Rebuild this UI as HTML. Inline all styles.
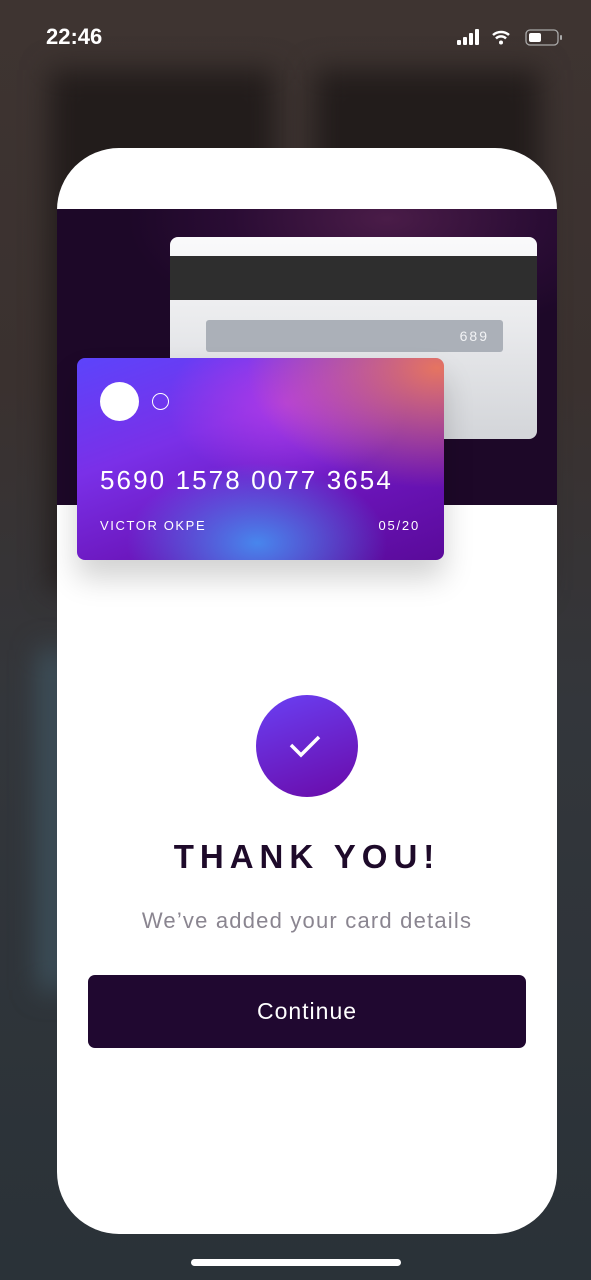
<!DOCTYPE html>
<html><head><meta charset="utf-8"><style>
*{margin:0;padding:0;box-sizing:border-box}
body{width:591px;height:1280px;overflow:hidden;position:relative;font-family:"Liberation Sans",sans-serif;
background:linear-gradient(180deg,#3e3431 0%,#3a312f 30%,#33363b 55%,#2a3238 100%)}
.abs{position:absolute}
.blur1{left:50px;top:70px;width:225px;height:520px;background:#221c1b;filter:blur(14px)}
.blur2{left:315px;top:70px;width:225px;height:520px;background:#221c1b;filter:blur(14px)}
.blur3{left:40px;top:650px;width:25px;height:340px;background:#3f5561;filter:blur(14px)}
.modal{left:57px;top:148px;width:500px;height:1086px;background:#fff;border-radius:62px;overflow:hidden}
.band{left:0;top:61px;width:500px;height:296px;background:radial-gradient(ellipse 260px 120px at 330px 10px,#4a1c48 0%,#2a0c34 60%,#1d0828 100%)}
.back{left:113px;top:89px;width:367px;height:202px;border-radius:8px;background:linear-gradient(180deg,#fafafb,#d3d5d9);overflow:hidden}
.strip{left:0;top:19px;width:100%;height:44px;background:#2e2e2e}
.cvv{left:36px;top:83px;width:297px;height:32px;background:#abb0b8;border-radius:3px;color:#f2f3f5;font-size:14px;letter-spacing:2px;text-align:right;padding-right:14px;line-height:32px}
.front{left:20px;top:210px;width:367px;height:202px;border-radius:8px;overflow:hidden;
background:
radial-gradient(ellipse 130px 80px at 180px 185px,rgba(70,140,240,.95),rgba(70,140,240,0) 100%),
radial-gradient(ellipse 190px 120px at 360px 10px,rgba(235,120,90,.95),rgba(235,120,90,0) 100%),
radial-gradient(ellipse 120px 80px at 210px 45px,rgba(180,60,230,.9),rgba(180,60,230,0) 100%),
linear-gradient(160deg,#5c44fb 0%,#7a30e8 35%,#6a14b8 70%,#5a0a9a 100%);
box-shadow:0 18px 30px rgba(0,0,0,.18)}
.c1{left:23px;top:24px;width:39px;height:39px;border-radius:50%;background:#fff}
.c2{left:75px;top:35px;width:17px;height:17px;border-radius:50%;border:1px solid #fff}
.num{left:23px;top:107px;color:#fff;font-size:26px;letter-spacing:2.1px}
.name{left:23px;top:160px;color:#fff;font-size:13px;letter-spacing:1.6px}
.exp{right:24px;top:160px;color:#fff;font-size:13px;letter-spacing:1.8px}
.check{left:199px;top:547px;width:102px;height:102px;border-radius:50%;background:linear-gradient(160deg,#6a40f4,#6a0aa8)}
.ty{left:0;width:500px;top:690px;text-align:center;font-size:33px;font-weight:bold;letter-spacing:6px;color:#1e0a2a}
.sub{left:0;width:500px;top:760px;text-align:center;font-size:22px;letter-spacing:1.2px;color:#8a8590}
.btn{left:31px;top:827px;width:438px;height:73px;border-radius:7px;background:#200830;color:#fff;font-size:23px;letter-spacing:1px;text-align:center;line-height:73px}
.home{left:191px;top:1259px;width:210px;height:7px;border-radius:4px;background:#fff}
</style></head><body>
<div class="abs blur1"></div><div class="abs blur2"></div><div class="abs blur3"></div>
<div class="abs" style="left:46px;top:24px;color:#fff;font-size:22px;font-weight:bold">22:46</div>
<svg class="abs" style="left:455px;top:28px" width="110" height="20" viewBox="0 0 110 20">
<rect x="2" y="12" width="4" height="5" rx="1" fill="#fff"/><rect x="8" y="9" width="4" height="8" rx="1" fill="#fff"/><rect x="14" y="5" width="4" height="12" rx="1" fill="#fff"/><rect x="20" y="1" width="4" height="16" rx="1" fill="#fff"/>
<path d="M38 7a12 12 0 0 1 16 0" stroke="#fff" stroke-width="2.5" fill="none"/><path d="M41 10.5a7 7 0 0 1 10 0" stroke="#fff" stroke-width="2.5" fill="none"/><circle cx="46" cy="14.5" r="2" fill="#fff"/>
<rect x="71" y="2" width="32" height="15" rx="4" stroke="#aaa" stroke-width="1.3" fill="none"/><rect x="74" y="5" width="12" height="9" rx="2" fill="#fff"/><rect x="105" y="7" width="2" height="5" rx="1" fill="#aaa"/>
</svg>
<div class="abs modal">
 <div class="abs band"></div>
 <div class="abs back"><div class="abs strip"></div><div class="abs cvv">689</div></div>
 <div class="abs front"><div class="abs c1"></div><div class="abs c2"></div>
  <div class="abs num">5690 1578 0077 3654</div><div class="abs name">VICTOR OKPE</div><div class="abs exp">05/20</div></div>
 <div class="abs check"><svg width="102" height="102" viewBox="0 0 102 102"><path d="M35 50l10 10 18-18" stroke="#fff" stroke-width="3.5" fill="none"/></svg></div>
 <div class="abs ty">THANK YOU!</div>
 <div class="abs sub">We’ve added your card details</div>
 <div class="abs btn">Continue</div>
</div>
<div class="abs home"></div>
</body></html>
